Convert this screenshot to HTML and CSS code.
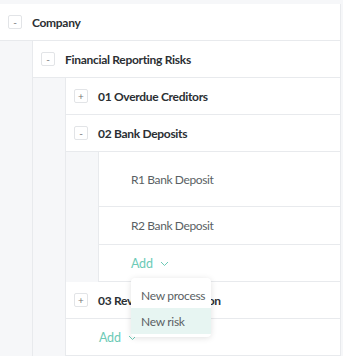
FILE: index.html
```html
<!DOCTYPE html>
<html lang="en">
<head>
    <meta charset="UTF-8">
    <meta name="viewport" content="width=device-width, initial-scale=1.0">
    <title>Risk Tree</title>
    <link rel="stylesheet" href="styles.css">
</head>
<body>
    <div class="tree">
        <div class="node">
            <div class="row">
                <span class="toggle">-</span>
                <span class="label">Company</span>
            </div>
            <div class="children">
                <div class="node">
                    <div class="row">
                        <span class="toggle">-</span>
                        <span class="label">Financial Reporting Risks</span>
                    </div>
                    <div class="children">
                        <div class="node">
                            <div class="row">
                                <span class="toggle">+</span>
                                <span class="label">01 Overdue Creditors</span>
                            </div>
                        </div>
                        <div class="node">
                            <div class="row">
                                <span class="toggle">-</span>
                                <span class="label">02 Bank Deposits</span>
                            </div>
                            <div class="children">
                                <div class="risk first">R1 Bank Deposit</div>
                                <div class="risk">R2 Bank Deposit</div>
                                <div class="add-row">
                                    <span class="add">Add
                                        <svg class="chev" width="9" height="6" viewBox="0 0 9 6"><path d="M1 1l3.5 3.5L8 1" fill="none" stroke="currentColor" stroke-width="1"/></svg>
                                    </span>
                                    <!-- open dropdown -->
                                    <div class="menu">
                                        <div class="menu-item">New process</div>
                                        <div class="menu-item active">New risk</div>
                                    </div>
                                </div>
                            </div>
                        </div>
                        <div class="node">
                            <div class="row">
                                <span class="toggle">+</span>
                                <span class="label">03 Revenue Recognition</span>
                            </div>
                        </div>
                        <div class="add-row top-add">
                            <span class="add">Add
                                <svg class="chev" width="9" height="6" viewBox="0 0 9 6"><path d="M1 1l3.5 3.5L8 1" fill="none" stroke="currentColor" stroke-width="1"/></svg>
                            </span>
                        </div>
                    </div>
                </div>
            </div>
        </div>
    </div>
</body>
</html>
```

FILE: styles.css
```css
:root {
    --page-bg: #f6f7f9;
    --line: #e8eaed;
    --dark-text: #2b2f33;
    --soft-text: #5a5f64;
    --teal: #6ccab6;
    --teal-bg: #e7f5f2;
}
* { margin: 0; padding: 0; box-sizing: border-box; }
body { font-family: Lato, "Open Sans", sans-serif; background-color: var(--page-bg); color: var(--dark-text); font-size: 12px; }
.tree { padding-top: 4px; margin-right: 2px; }
.node { background: var(--page-bg); }
.row { display: flex; align-items: center; height: 37px; padding-left: 8px; background: #fff; border-bottom: 1px solid var(--line); border-right: 1px solid var(--line); }
.toggle { display: flex; align-items: center; justify-content: center; flex: none; width: 14px; height: 14px; border: 1px solid #e2e4e7; border-radius: 2px; font-size: 10px; color: #777; line-height: 1; margin-right: 10px; }
.label { font-weight: 700; letter-spacing: -0.3px; white-space: nowrap; }
.children { margin-left: 32px; border-left: 1px solid var(--line); }
.risk { display: flex; align-items: center; height: 38px; padding-left: 32px; background: #fff; color: var(--soft-text); letter-spacing: -0.4px; border-bottom: 1px solid var(--line); border-right: 1px solid var(--line); }
.risk.first { height: 55px; }
.add-row { position: relative; display: flex; align-items: center; height: 37px; padding-left: 32px; background: #fff; border-bottom: 1px solid var(--line); border-right: 1px solid var(--line); }
.top-add { padding-left: 33px; }
.add { display: flex; align-items: center; gap: 7px; color: var(--teal); font-size: 12.5px; letter-spacing: -0.2px; }
.chev { margin-top: 1px; }
.menu { position: absolute; left: 32px; top: 33px; width: 80px; padding: 4px 0 3px; background: #fff; border-radius: 4px; box-shadow: 0 1px 6px rgba(0, 0, 0, 0.12); z-index: 2; }
.menu-item { padding: 0 10px; height: 26px; display: flex; align-items: center; color: var(--soft-text); font-size: 12px; letter-spacing: -0.3px; white-space: nowrap; }
.menu-item.active { background: var(--teal-bg); }
```
